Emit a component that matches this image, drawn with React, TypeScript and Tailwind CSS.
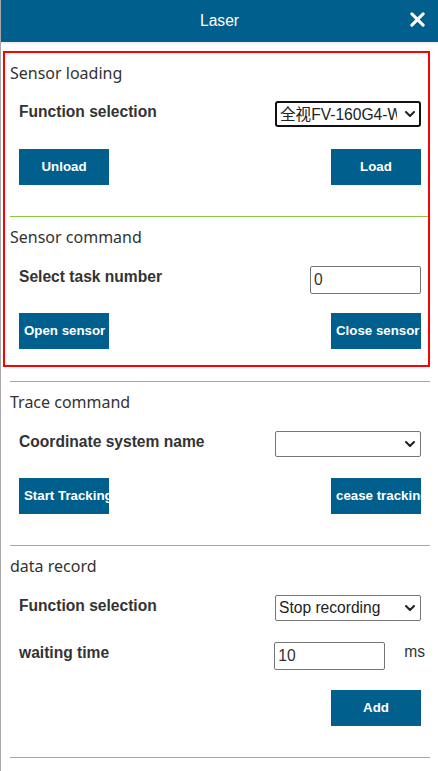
import type { ReactNode } from "react";

const sans = "font-['Liberation_Sans','Noto_Sans_CJK_SC',Arial,sans-serif]";
const title = "font-['Noto_Sans','Open_Sans',sans-serif]";

function Chevron() {
  return (
    <svg
      viewBox="0 0 10 6"
      className="pointer-events-none absolute right-[6px] top-1/2 h-[6px] w-[10px] -translate-y-1/2"
      fill="none"
      stroke="#222"
      strokeWidth="2"
      strokeLinecap="round"
      strokeLinejoin="round"
    >
      <path d="M1 1l4 4 4-4" />
    </svg>
  );
}

function Select({ value, focused }: { value: string; focused?: boolean }) {
  return (
    <div className="relative h-[26px] w-[146px]">
      <select
        defaultValue={value}
        className={`h-full w-full appearance-none bg-white pl-[3px] pr-[22px] text-[15.6px] text-[#222] outline-none ${sans} ${
          focused ? "rounded-[3px] border-2 border-[#111]" : "rounded-[2px] border border-[#767676]"
        }`}
      >
        <option value={value}>{value}</option>
      </select>
      <Chevron />
    </div>
  );
}

function Input({ value }: { value: string }) {
  return (
    <input
      defaultValue={value}
      className={`h-[28px] w-[111px] rounded-[2px] border border-[#767676] bg-white px-[3px] text-[15.6px] text-[#333] outline-none ${sans}`}
    />
  );
}

function Btn({ children }: { children: ReactNode }) {
  return (
    <button
      className={`h-[36px] w-[90px] overflow-hidden whitespace-nowrap bg-[#005f8c] px-[5px] text-center text-[13.3px] font-bold text-white ${sans}`}
    >
      {children}
    </button>
  );
}

function Row({ label, children, className = "" }: { label: string; children: ReactNode; className?: string }) {
  return (
    <div className={`flex items-start justify-between ${className}`}>
      <span className={`pt-px text-[15.6px] font-bold leading-[20px] text-[#333] ${sans}`}>{label}</span>
      {children}
    </div>
  );
}

function Title({ children }: { children: ReactNode }) {
  return <div className={`text-[16px] leading-[20px] text-[#333] ${title}`}>{children}</div>;
}

export default function App() {
  return (
    <div className="relative h-[771px] w-[438px] overflow-hidden border-l border-[#a8a8a8] bg-white">
      <header className="relative -ml-px flex h-[42px] items-center justify-center border-l border-[#1d2b33] bg-[#005f8c]">
        <span className={`text-[15.6px] text-white ${sans}`}>Laser</span>
        <svg
          viewBox="0 0 16 16"
          className="absolute right-[13px] top-[12px] h-[15px] w-[15px]"
          stroke="white"
          strokeWidth="3.2"
          strokeLinecap="round"
        >
          <path d="M2 2l12 12M14 2L2 14" />
        </svg>
      </header>
      <div className="h-[2px] bg-[#f0f0f0]" />

      <div className="mt-[7px] ml-[2px] w-[427px] border-2 border-[#ff0000]">
        <section className="ml-[5px] pt-[10px] pb-[31px]">
          <Title>Sensor loading</Title>
          <div className="pl-[9px] pr-[7px]">
            <Row label="Function selection" className="mt-[18px]">
              <Select value="全视FV-160G4-WH" focused />
            </Row>
            <div className="mt-[22px] flex justify-between">
              <Btn>Unload</Btn>
              <Btn>Load</Btn>
            </div>
          </div>
        </section>
        <section className="ml-[5px] border-t border-[#8dc63f] pt-[10px] pb-[16px]">
          <Title>Sensor command</Title>
          <div className="pl-[9px] pr-[7px]">
            <Row label="Select task number" className="mt-[19px]">
              <Input value="0" />
            </Row>
            <div className="mt-[19px] flex justify-between">
              <Btn>Open sensor</Btn>
              <Btn>Close sensor</Btn>
            </div>
          </div>
        </section>
      </div>

      <section className="mt-[14px] ml-[9px] w-[420px] border-t border-[#8dc63f] pt-[10px] pb-[31px]">
        <Title>Trace command</Title>
        <div className="pl-[9px] pr-[9px]">
          <Row label="Coordinate system name" className="mt-[19px]">
            <Select value="" />
          </Row>
          <div className="mt-[21px] flex justify-between">
            <Btn>Start Tracking</Btn>
            <Btn>cease tracking</Btn>
          </div>
        </div>
      </section>

      <section className="ml-[9px] w-[420px] border-t border-[#8dc63f] pt-[10px] pb-[31px]">
        <Title>data record</Title>
        <div className="pl-[9px] pr-[9px]">
          <Row label="Function selection" className="mt-[19px]">
            <Select value="Stop recording" />
          </Row>
          <Row label="waiting time" className="mt-[21px]">
            <div className="flex items-start">
              <Input value="10" />
              <span className={`ml-[19px] mr-[-4px] text-[15.6px] leading-[20px] text-[#333] ${sans}`}>ms</span>
            </div>
          </Row>
          <div className="mt-[20px] flex justify-end">
            <Btn>Add</Btn>
          </div>
        </div>
      </section>
      <div className="ml-[9px] w-[420px] border-t border-[#8dc63f]" />
    </div>
  );
}
